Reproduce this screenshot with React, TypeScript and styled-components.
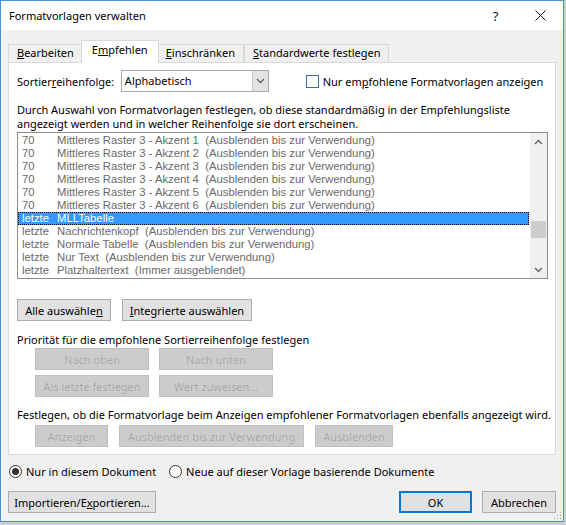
import React from "react";
import styled, { createGlobalStyle, css } from "styled-components";

const GlobalStyle = createGlobalStyle`
  html, body { margin: 0; padding: 0; }
  body {
    background: #cdcdcd;
    font-family: "Noto Sans", "Open Sans", sans-serif;
    font-size: 11px;
    color: #000;
  }
  * { box-sizing: border-box; }
`;

const Window = styled.div`
  position: relative;
  width: 564px;
  height: 522px;
  border: 1px solid #4f8fd3;
  background: #f0f0f0;
  display: flex;
  flex-direction: column;
`;

const TitleBar = styled.div`
  height: 29px;
  background: #fff;
  display: flex;
  align-items: center;
  padding-left: 8px;
`;

const Title = styled.div`
  flex: 1;
  font-size: 11px;
`;

const TitleButton = styled.div`
  width: 45px;
  height: 29px;
  display: flex;
  align-items: center;
  justify-content: center;
  font-size: 13px;
  color: #111;
`;

const Client = styled.div`
  flex: 1;
  display: flex;
  flex-direction: column;
  padding: 0 7px;
`;

const TabStrip = styled.div`
  margin-top: 10px;
  height: 23px;
  margin-bottom: -1px;
  display: flex;
  align-items: flex-end;
`;

const Tab = styled.div<{ $active?: boolean }>`
  height: 18px;
  margin-bottom: 1px;
  padding: 0 8px;
  border: 1px solid #d9d9d9;
  border-bottom: none;
  background: #f0f0f0;
  line-height: 16px;
  white-space: nowrap;
  ${(p) =>
    p.$active &&
    css`
      position: relative;
      z-index: 1;
      height: 23px;
      margin: 0 -2px;
      padding: 0 10px;
      background: #fff;
      line-height: 18px;
    `}
`;

const Panel = styled.div`
  border: 1px solid #d9d9d9;
  background: #fff;
  padding: 7px 7px 7px 8px;
  display: flex;
  flex-direction: column;
`;

const SortRow = styled.div`
  display: flex;
  align-items: center;
  height: 22px;
`;

const FieldLabel = styled.div<{ $width: number }>`
  width: ${(p) => p.$width}px;
  white-space: nowrap;
`;

const Combo = styled.div`
  width: 151px;
  height: 22px;
  border: 1px solid #a8a8a8;
  background: #fff;
  display: flex;
  align-items: stretch;
`;

const ComboText = styled.div`
  flex: 1;
  padding-left: 3px;
  line-height: 20px;
`;

const ComboButton = styled.div`
  width: 16px;
  background: #e3e3e3;
  border-left: 1px solid #c4c4c4;
  display: flex;
  align-items: center;
  justify-content: center;
`;

const CheckBox = styled.div`
  width: 13px;
  height: 13px;
  border: 1px solid #3a6ea5;
  background: #fff;
  margin-left: 37px;
  margin-right: 4px;
`;

const Description = styled.div`
  margin-top: 11px;
  line-height: 14px;
`;

const ListBox = styled.div`
  margin-top: 1px;
  height: 147px;
  border: 1px solid #8c8c8c;
  display: flex;
`;

const Rows = styled.div`
  flex: 1;
  padding-top: 1px;
  display: flex;
  flex-direction: column;
  font-family: "Liberation Sans", Arial, sans-serif;
  font-size: 11.3px;
`;

const Row = styled.div<{ $selected?: boolean }>`
  height: 13px;
  line-height: 13px;
  display: flex;
  padding-left: 4px;
  color: #6a6a6a;
  white-space: pre;
  ${(p) =>
    p.$selected &&
    css`
      background: #3399ff;
      color: #fff;
      outline: 1px dotted #000;
      outline-offset: -1px;
      margin-right: 1px;
    `}
`;

const RowCell = styled.span<{ $width?: number }>`
  ${(p) => (p.$width ? `width: ${p.$width}px; flex: none;` : "")}
`;

const ScrollBar = styled.div`
  width: 17px;
  background: #f0f0f0;
  display: flex;
  flex-direction: column;
`;

const ScrollArrow = styled.div`
  height: 17px;
  display: flex;
  align-items: center;
  justify-content: center;
`;

const ScrollTrack = styled.div`
  flex: 1;
  position: relative;
`;

const Thumb = styled.div`
  position: absolute;
  left: 1px;
  right: 1px;
  height: 17px;
  background: #cdcdcd;
`;

const ButtonRow = styled.div<{ $top: number; $indent?: number }>`
  display: flex;
  gap: 11px;
  margin-top: ${(p) => p.$top}px;
  padding-left: ${(p) => p.$indent ?? 0}px;
`;

const ButtonGrid = styled.div`
  display: grid;
  grid-template-columns: 114px 114px;
  gap: 5px 10px;
  margin-top: 1px;
  padding-left: 18px;
`;

const Button = styled.div<{ $width?: number; $disabled?: boolean; $default?: boolean }>`
  width: ${(p) => (p.$width ? `${p.$width}px` : "auto")};
  height: 22px;
  border: 1px solid #adadad;
  background: #e1e1e1;
  display: flex;
  align-items: center;
  justify-content: center;
  white-space: nowrap;
  color: #000;
  ${(p) =>
    p.$disabled &&
    css`
      background: #cccccc;
      border-color: #bfbfbf;
      color: #a4a4a4;
      text-shadow: 0 0 1px #e6e6e6;
    `}
  ${(p) =>
    p.$default &&
    css`
      border: 2px solid #0078d7;
    `}
`;

const SectionText = styled.div<{ $top: number }>`
  margin-top: ${(p) => p.$top}px;
  line-height: 14px;
  white-space: nowrap;
`;

const RadioRow = styled.div`
  margin-top: 9px;
  height: 14px;
  display: flex;
  align-items: center;
`;

const RadioItem = styled.label`
  display: flex;
  align-items: center;
  margin-left: 1px;
  margin-right: 12px;
  white-space: nowrap;
`;

const RadioCircle = styled.span<{ $checked?: boolean }>`
  width: 13px;
  height: 13px;
  border-radius: 50%;
  border: 1px solid #333;
  background: #fff;
  margin-right: 4px;
  display: flex;
  align-items: center;
  justify-content: center;
  &::after {
    content: "";
    width: 7px;
    height: 7px;
    border-radius: 50%;
    background: ${(p) => (p.$checked ? "#333" : "transparent")};
  }
`;

const Footer = styled.div`
  margin-top: 13px;
  display: flex;
  gap: 10px;
`;

const Spacer = styled.div`
  flex: 1;
`;

const Grip = styled.svg`
  position: absolute;
  right: 1px;
  bottom: 1px;
`;

const Chevron = ({ dir }: { dir: "up" | "down" }) => (
  <svg width="9" height="6" viewBox="0 0 9 6">
    <path
      d={dir === "up" ? "M1 5 L4.5 1.5 L8 5" : "M1 1 L4.5 4.5 L8 1"}
      fill="none"
      stroke="#606060"
      strokeWidth="1.3"
    />
  </svg>
);

type Item = { prio: string; name: string; note?: string };

const items: Item[] = [
  { prio: "70", name: "Mittleres Raster 3 - Akzent 1", note: "(Ausblenden bis zur Verwendung)" },
  { prio: "70", name: "Mittleres Raster 3 - Akzent 2", note: "(Ausblenden bis zur Verwendung)" },
  { prio: "70", name: "Mittleres Raster 3 - Akzent 3", note: "(Ausblenden bis zur Verwendung)" },
  { prio: "70", name: "Mittleres Raster 3 - Akzent 4", note: "(Ausblenden bis zur Verwendung)" },
  { prio: "70", name: "Mittleres Raster 3 - Akzent 5", note: "(Ausblenden bis zur Verwendung)" },
  { prio: "70", name: "Mittleres Raster 3 - Akzent 6", note: "(Ausblenden bis zur Verwendung)" },
  { prio: "letzte", name: "MLLTabelle" },
  { prio: "letzte", name: "Nachrichtenkopf", note: "(Ausblenden bis zur Verwendung)" },
  { prio: "letzte", name: "Normale Tabelle", note: "(Ausblenden bis zur Verwendung)" },
  { prio: "letzte", name: "Nur Text", note: "(Ausblenden bis zur Verwendung)" },
  { prio: "letzte", name: "Platzhaltertext", note: "(Immer ausgeblendet)" },
];

const selectedIndex = 6;
const trackHeight = 110;
const thumbHeight = 17;
const scrollRatio = 0.765;

export default function App() {
  const thumbTop = Math.round(scrollRatio * (trackHeight - thumbHeight));
  return (
    <>
      <GlobalStyle />
      <Window>
        <TitleBar>
          <Title>Formatvorlagen verwalten</Title>
          <TitleButton>?</TitleButton>
          <TitleButton>
            <svg width="11" height="11" viewBox="0 0 11 11">
              <path d="M0.5 0.5 L10.5 10.5 M10.5 0.5 L0.5 10.5" stroke="#111" strokeWidth="1" fill="none" />
            </svg>
          </TitleButton>
        </TitleBar>
        <Client>
          <TabStrip>
            <Tab>
              <u>B</u>earbeiten
            </Tab>
            <Tab $active>
              E<u>m</u>pfehlen
            </Tab>
            <Tab>
              <u>E</u>inschränken
            </Tab>
            <Tab>
              <u>S</u>tandardwerte festlegen
            </Tab>
          </TabStrip>
          <Panel>
            <SortRow>
              <FieldLabel $width={106}>
                Sortier<u>r</u>eihenfolge:
              </FieldLabel>
              <Combo>
                <ComboText>Alphabetisch</ComboText>
                <ComboButton>
                  <Chevron dir="down" />
                </ComboButton>
              </Combo>
              <CheckBox />
              <FieldLabel $width={230}>
                Nur em<u>p</u>fohlene Formatvorlagen anzeigen
              </FieldLabel>
            </SortRow>
            <Description>
              Durch Auswahl von Formatvorlagen festlegen, ob diese standardmäßig in der Empfehlungsliste
              <br />
              angezeigt werden und in welcher Reihenfolge sie dort erscheinen.
            </Description>
            <ListBox>
              <Rows>
                {items.map((it, i) => (
                  <Row key={i} $selected={i === selectedIndex}>
                    <RowCell $width={35}>{it.prio}</RowCell>
                    <RowCell>
                      {it.name}
                      {it.note ? "  " + it.note : ""}
                    </RowCell>
                  </Row>
                ))}
              </Rows>
              <ScrollBar>
                <ScrollArrow>
                  <Chevron dir="up" />
                </ScrollArrow>
                <ScrollTrack>
                  <Thumb style={{ top: thumbTop }} />
                </ScrollTrack>
                <ScrollArrow>
                  <Chevron dir="down" />
                </ScrollArrow>
              </ScrollBar>
            </ListBox>
            <ButtonRow $top={20}>
              <Button $width={94}>
                Alle auswähle<u>n</u>
              </Button>
              <Button $width={130}>
                <u>I</u>ntegrierte auswählen
              </Button>
            </ButtonRow>
            <SectionText $top={12}>Priorität für die empfohlene Sortierreihenfolge festlegen</SectionText>
            <ButtonGrid>
              <Button $disabled>Nach oben</Button>
              <Button $disabled>Nach unten</Button>
              <Button $disabled>Als letzte festlegen</Button>
              <Button $disabled>Wert zuweisen...</Button>
            </ButtonGrid>
            <SectionText $top={11}>
              Festlegen, ob die Formatvorlage beim Anzeigen empfohlener Formatvorlagen ebenfalls angezeigt wird.
            </SectionText>
            <ButtonRow $top={3} $indent={18}>
              <Button $width={73} $disabled>
                Anzeigen
              </Button>
              <Button $width={185} $disabled>
                Ausblenden bis zur Verwendung
              </Button>
              <Button $width={78} $disabled>
                Ausblenden
              </Button>
            </ButtonRow>
          </Panel>
          <RadioRow>
            <RadioItem>
              <RadioCircle $checked />
              Nur in diesem Dokument
            </RadioItem>
            <RadioItem>
              <RadioCircle />
              Neue auf dieser Vorlage basierende Dokumente
            </RadioItem>
          </RadioRow>
          <Footer>
            <Button $width={148}>
              Importieren/E<u>x</u>portieren...
            </Button>
            <Spacer />
            <Button $width={73} $default>
              OK
            </Button>
            <Button $width={74}>Abbrechen</Button>
          </Footer>
        </Client>
        <Grip width="10" height="10" viewBox="0 0 10 10">
          <g fill="#a0a0a0">
            <rect x="8" y="2" width="1" height="1" />
            <rect x="5" y="5" width="1" height="1" />
            <rect x="8" y="5" width="1" height="1" />
            <rect x="2" y="8" width="1" height="1" />
            <rect x="5" y="8" width="1" height="1" />
            <rect x="8" y="8" width="1" height="1" />
          </g>
        </Grip>
      </Window>
    </>
  );
}
